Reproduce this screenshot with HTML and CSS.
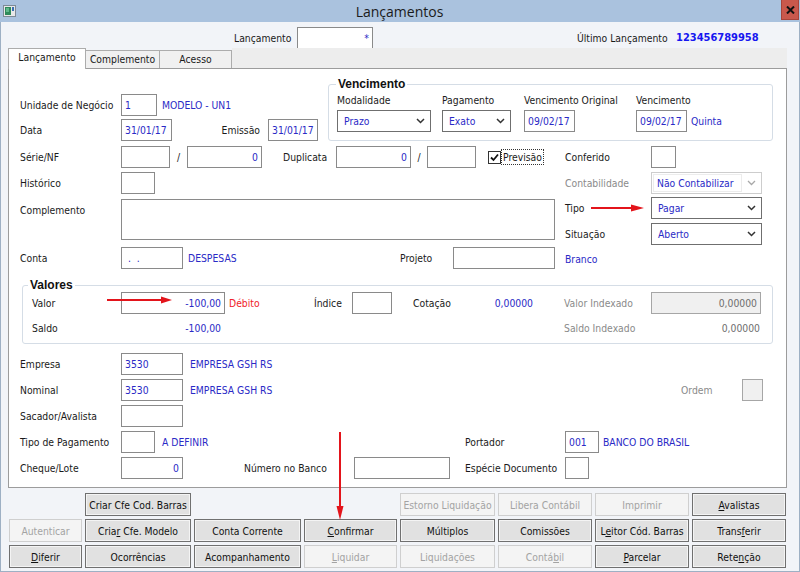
FILE: index.html
```html
<!DOCTYPE html>
<html lang="pt-BR">
<head>
    <meta charset="UTF-8">
    <meta name="viewport" content="width=device-width, initial-scale=1.0">
    <title>Lançamentos</title>
    <link rel="stylesheet" href="styles.css">
</head>
<body>
<div class="window">
    <!-- Title bar -->
    <div class="titlebar">
        <svg class="app-icon" width="13" height="12" viewBox="0 0 13 12">
            <rect x="0.5" y="0.5" width="12" height="11" fill="#e8e8e8" stroke="#7d8a96"/>
            <rect x="2" y="2" width="6" height="8" fill="#2f8a5a"/>
            <rect x="3" y="3" width="3" height="4" fill="#5fb88a"/>
            <rect x="9" y="2" width="2" height="4" fill="#3a6fb0"/>
        </svg>
        <div class="title">Lançamentos</div>
        <div class="close">
            <svg width="9" height="8" viewBox="0 0 9 8"><path d="M1 0.5l7 7M8 0.5l-7 7" stroke="#111" stroke-width="2"/></svg>
        </div>
    </div>

    <div class="top-row">
        <span class="lbl-lanc">Lançamento</span>
        <div class="fld w76 star">*</div>
        <span class="lbl-ultimo">Último Lançamento</span>
        <span class="ultimo">123456789958</span>
    </div>

    <!-- Tabs -->
    <div class="tabs">
        <div class="tab active">Lançamento</div>
        <div class="tab t2">Complemento</div>
        <div class="tab t3">Acesso</div>
        <div class="tab-fill"></div>
    </div>

    <div class="panel">
        <div class="top-block">
            <div class="top-left">
                <div class="row">
                    <span class="lbl">Unidade de Negócio</span>
                    <div class="fld w36">1</div>
                    <span class="link ml5">MODELO - UN1</span>
                </div>
                <div class="row">
                    <span class="lbl">Data</span>
                    <div class="fld w51">31/01/17</div>
                    <span class="lbl-emissao">Emissão</span>
                    <div class="fld w50">31/01/17</div>
                </div>
            </div>
            <fieldset class="group venc">
                <legend>Vencimento</legend>
                <div class="venc-cols">
                    <div class="venc-col c1">
                        <span class="cap">Modalidade</span>
                        <div class="combo w94"><span>Prazo</span><svg width="9" height="6" viewBox="0 0 9 6"><path d="M1 1l3.5 3.5L8 1" fill="none" stroke="#333" stroke-width="1.5"/></svg></div>
                    </div>
                    <div class="venc-col c2">
                        <span class="cap">Pagamento</span>
                        <div class="combo w69"><span>Exato</span><svg width="9" height="6" viewBox="0 0 9 6"><path d="M1 1l3.5 3.5L8 1" fill="none" stroke="#333" stroke-width="1.5"/></svg></div>
                    </div>
                    <div class="venc-col c3">
                        <span class="cap">Vencimento Original</span>
                        <div class="fld w51">09/02/17</div>
                    </div>
                    <div class="venc-col c4">
                        <span class="cap">Vencimento</span>
                        <div class="inline">
                            <div class="fld w51">09/02/17</div>
                            <span class="link ml4">Quinta</span>
                        </div>
                    </div>
                </div>
            </fieldset>
        </div>

        <div class="mid-block">
            <div class="mid-left">
                <div class="row">
                    <span class="lbl">Série/NF</span>
                    <div class="fld w49"></div>
                    <span class="slash">/</span>
                    <div class="fld w75 num">0</div>
                    <span class="lbl-dup">Duplicata</span>
                    <div class="fld w75 num">0</div>
                    <span class="slash s2">/</span>
                    <div class="fld w49"></div>
                    <span class="check">
                        <svg width="9" height="9" viewBox="0 0 9 9"><path d="M1 4.5l2.5 2.5L8 1.5" fill="none" stroke="#111" stroke-width="1.8"/></svg>
                    </span>
                    <span class="focus-lbl">Previsão</span>
                </div>
                <div class="row mt4">
                    <span class="lbl">Histórico</span>
                    <div class="fld w34"></div>
                </div>
                <div class="row row-tall mt5">
                    <span class="lbl top">Complemento</span>
                    <div class="fld memo"></div>
                </div>
                <div class="row mt7">
                    <span class="lbl">Conta</span>
                    <div class="conta-grp">
                        <div class="fld w62">&nbsp;.&nbsp;&nbsp;.</div>
                        <span class="link ml5">DESPESAS</span>
                    </div>
                    <span class="lbl-proj">Projeto</span>
                    <div class="fld w102"></div>
                </div>
            </div>
            <div class="mid-right">
                <div class="row">
                    <span class="rlbl">Conferido</span>
                    <div class="fld w25"></div>
                </div>
                <div class="row mt4">
                    <span class="rlbl gray">Contabilidade</span>
                    <div class="combo w111 disabled"><span class="inner">Não Contabilizar</span><svg width="9" height="6" viewBox="0 0 9 6"><path d="M1 1l3.5 3.5L8 1" fill="none" stroke="#a8a8a8" stroke-width="1.3"/></svg></div>
                </div>
                <div class="row mt3">
                    <span class="rlbl">Tipo</span>
                    <div class="combo w111"><span>Pagar</span><svg width="9" height="6" viewBox="0 0 9 6"><path d="M1 1l3.5 3.5L8 1" fill="none" stroke="#333" stroke-width="1.5"/></svg></div>
                </div>
                <div class="row mt4">
                    <span class="rlbl">Situação</span>
                    <div class="combo w111"><span>Aberto</span><svg width="9" height="6" viewBox="0 0 9 6"><path d="M1 1l3.5 3.5L8 1" fill="none" stroke="#333" stroke-width="1.5"/></svg></div>
                </div>
                <div class="row mt3">
                    <span class="link">Branco</span>
                </div>
            </div>
        </div>

        <fieldset class="group valores">
            <legend>Valores</legend>
            <div class="row">
                <span class="vlbl">Valor</span>
                <div class="fld w104 num">-100,00</div>
                <span class="debito">Débito</span>
                <span class="lbl-indice">Índice</span>
                <div class="fld w40"></div>
                <span class="lbl-cot">Cotação</span>
                <span class="link num w40">0,00000</span>
                <span class="lbl-vi gray">Valor Indexado</span>
                <div class="fld w110 num disabled">0,00000</div>
            </div>
            <div class="row mt3">
                <span class="vlbl">Saldo</span>
                <span class="link num w100">-100,00</span>
                <span class="lbl-si gray">Saldo Indexado</span>
                <span class="num w109 gray-val">0,00000</span>
            </div>
        </fieldset>

        <div class="lower-block">
            <div class="row">
                <span class="lbl">Empresa</span>
                <div class="fld w62">3530</div>
                <span class="link ml7">EMPRESA GSH RS</span>
            </div>
            <div class="row mt4">
                <span class="lbl">Nominal</span>
                <div class="fld w62">3530</div>
                <span class="link ml7">EMPRESA GSH RS</span>
                <div class="ordem">
                    <span class="gray">Ordem</span>
                    <div class="fld w21 disabled"></div>
                </div>
            </div>
            <div class="row mt4">
                <span class="lbl">Sacador/Avalista</span>
                <div class="fld w62"></div>
            </div>
            <div class="row mt4">
                <span class="lbl">Tipo de Pagamento</span>
                <div class="tp-grp">
                    <div class="fld w34"></div>
                    <span class="link ml7">A DEFINIR</span>
                </div>
                <span class="lbl-port">Portador</span>
                <div class="fld w34">001</div>
                <span class="link ml4">BANCO DO BRASIL</span>
            </div>
            <div class="row mt4">
                <span class="lbl">Cheque/Lote</span>
                <div class="fld w62 num">0</div>
                <span class="lbl-nb">Número no Banco</span>
                <div class="fld w96"></div>
                <span class="lbl-esp">Espécie Documento</span>
                <div class="fld w24"></div>
            </div>
        </div>
    </div>

    <!-- Buttons -->
    <div class="buttons">
        <span></span>
        <button>Criar Cfe Cod. Barras</button>
        <span></span>
        <span></span>
        <button disabled>Estorno Liquidação</button>
        <button disabled>Libera Contábil</button>
        <button disabled>Imprimir</button>
        <button><u>A</u>valistas</button>

        <button disabled>Autenticar</button>
        <button>Cria<u>r</u> Cfe. Modelo</button>
        <button>Conta Corrente</button>
        <button><u>C</u>onfirmar</button>
        <button>Múltiplos</button>
        <button>Comissões</button>
        <button>L<u>e</u>itor Cód. Barras</button>
        <button>Trans<u>f</u>erir</button>

        <button><u>D</u>iferir</button>
        <button>Ocorrências</button>
        <button>Acompanhamento</button>
        <button disabled><u>L</u>iquidar</button>
        <button disabled>Liquidações</button>
        <button disabled>Contá<u>b</u>il</button>
        <button><u>P</u>arcelar</button>
        <button>Rete<u>n</u>ção</button>
    </div>

    <!-- red annotation arrows -->
    <svg class="arrow arrow-valor" width="70" height="10" viewBox="0 0 70 10">
        <path d="M2 5H58" stroke="#e3141b" stroke-width="2"/>
        <path d="M56 1.5L67 5L56 8.5Z" fill="#e3141b"/>
    </svg>
    <svg class="arrow arrow-tipo" width="60" height="10" viewBox="0 0 60 10">
        <path d="M2 5H44" stroke="#e3141b" stroke-width="2"/>
        <path d="M42 1.5L55 5L42 8.5Z" fill="#e3141b"/>
    </svg>
    <svg class="arrow arrow-conf" width="10" height="92" viewBox="0 0 10 92">
        <path d="M5 0V76" stroke="#e3141b" stroke-width="2"/>
        <path d="M1.5 74L5 88L8.5 74Z" fill="#e3141b"/>
    </svg>
</div>
</body>
</html>
```

FILE: styles.css
```css
/* Reset */
* {
    margin: 0;
    padding: 0;
    box-sizing: border-box;
}

body {
    width: 800px;
    height: 572px;
    overflow: hidden;
    font-family: "DejaVu Sans Condensed", "Liberation Sans", Tahoma, sans-serif;
    font-size: 10.3px;
    color: #1a1a1a;
}

.window {
    position: relative;
    width: 800px;
    height: 572px;
    background: #f2f4f8;
    box-shadow: inset 1px 0 #9eb0c4, inset -1px 0 #9eb0c4, inset 0 -1px #9eb0c4;
}

/* Title bar */
.titlebar {
    height: 22px;
    background: #aac2de;
    display: flex;
    align-items: center;
}

.app-icon {
    margin-left: 3px;
}

.title {
    flex: 1;
    text-align: center;
    font-family: "Open Sans", "Liberation Sans", sans-serif;
    font-size: 14px;
    color: #1b1b1b;
    padding-left: 2px;
}

.close {
    align-self: flex-start;
    width: 18px;
    height: 20px;
    margin-right: 1px;
    background: #c9584c;
    border: 1px solid #a8443a;
    border-top: none;
    display: flex;
    align-items: center;
    justify-content: center;
}

/* Header row */
.top-row {
    display: flex;
    align-items: center;
    height: 21px;
    margin-top: 5px;
}

.lbl-lanc {
    margin-left: 234px;
    width: 63px;
}

.lbl-ultimo {
    margin-left: 204px;
    width: 99px;
}

.ultimo {
    color: #1717f0;
    font-weight: bold;
    font-size: 11px;
}

.star {
    text-align: right;
    color: #4a4ae8;
    padding-right: 4px;
}

/* Tabs */
.tabs {
    display: flex;
    align-items: flex-end;
    height: 20px;
    margin-left: 8px;
    width: 779px;
    position: relative;
    z-index: 1;
}

.tab {
    height: 18px;
    line-height: 16px;
    text-align: center;
    background: #f0f0f0;
    border: 1px solid #acacac;
    border-bottom: none;
}

.tab.active {
    width: 78px;
    height: 21px;
    margin-bottom: -1px;
    line-height: 17px;
    background: #fff;
}

.tab.t2 {
    width: 75px;
    margin-left: -1px;
}

.tab.t3 {
    width: 73px;
    margin-left: -1px;
}

.tab-fill {
    flex: 1;
    height: 20px;
    background: #ededed;
}

/* Tab panel */
.panel {
    margin-left: 8px;
    width: 779px;
    height: 420px;
    background: #fff;
    border: 1px solid #9c9c9c;
    padding-left: 11px;
}

.row {
    display: flex;
    align-items: center;
    height: 22px;
    white-space: nowrap;
}

.mt3 { margin-top: 3px; }
.mt4 { margin-top: 4px; }
.mt5 { margin-top: 5px; }
.mt7 { margin-top: 7px; }
.ml4 { margin-left: 4px; }
.ml5 { margin-left: 5px; }
.ml7 { margin-left: 7px; }

.lbl {
    width: 101px;
}

.lbl.top {
    align-self: flex-start;
    padding-top: 5px;
}

.link {
    color: #2a2ac6;
}

.gray {
    color: #8a8a8a;
}

/* Text fields */
.fld {
    height: 22px;
    line-height: 20px;
    border: 1px solid #8a8a8a;
    background: #fff;
    color: #2a2ac6;
    padding: 0 3px;
    white-space: nowrap;
    overflow: hidden;
}

.fld.disabled {
    background: #f0f0f0;
    border-color: #a6a6a6;
    color: #6e6e6e;
}

.num {
    text-align: right;
}

.w21 { width: 21px; }
.w24 { width: 24px; }
.w25 { width: 25px; }
.w34 { width: 34px; }
.w36 { width: 36px; }
.w40 { width: 40px; }
.w49 { width: 49px; }
.w50 { width: 50px; }
.w51 { width: 51px; }
.w62 { width: 62px; }
.w69 { width: 69px; }
.w75 { width: 75px; }
.w76 { width: 76px; }
.w94 { width: 94px; }
.w96 { width: 96px; }
.w100 { width: 100px; }
.w102 { width: 102px; }
.w104 { width: 104px; }
.w109 { width: 109px; }
.w110 { width: 110px; }
.w111 { width: 111px; }

/* Combo boxes */
.combo {
    height: 22px;
    border: 1px solid #6f6f6f;
    background: #fff;
    color: #2a2ac6;
    display: flex;
    align-items: center;
    justify-content: space-between;
    padding: 0 5px 0 6px;
}

.combo svg {
    flex-shrink: 0;
}

.combo.disabled {
    border-color: #cdcdcd;
    padding: 1px 5px 1px 1px;
}

.combo.disabled .inner {
    flex: 1;
    height: 18px;
    line-height: 16px;
    border: 1px solid #ececec;
    padding-left: 3px;
    margin-right: 5px;
}

/* Group boxes */
.group {
    border: 1px solid #d5dde6;
    border-radius: 3px;
}

.group legend {
    font-family: "Liberation Sans", sans-serif;
    font-weight: bold;
    font-size: 12px;
    line-height: 14px;
    padding: 0 2px;
    color: #111;
}

/* Top block */
.top-block {
    display: flex;
    padding-top: 8px;
}

.top-left {
    width: 308px;
    padding-top: 17px;
}

.top-left .row + .row {
    margin-top: 3px;
}

.lbl-emissao {
    width: 96px;
    text-align: right;
    padding-right: 8px;
}

.venc {
    width: 445px;
    padding: 3px 0 3px 8px;
}

.venc legend {
    margin-left: -1px;
}

.venc-cols {
    display: flex;
}

.venc-col {
    display: flex;
    flex-direction: column;
}

.venc-col .cap {
    height: 13px;
    line-height: 13px;
    margin-bottom: 3px;
}

.venc-col.c1 { width: 105px; }
.venc-col.c2 { width: 82px; }
.venc-col.c3 { width: 112px; }

.inline {
    display: flex;
    align-items: center;
}

/* Middle block */
.mid-block {
    display: flex;
    margin-top: 5px;
}

.mid-left {
    width: 545px;
}

.slash {
    width: 17px;
    text-align: center;
}

.slash.s2 {
    width: 16px;
}

.lbl-dup {
    margin-left: 21px;
    width: 53px;
}

.check {
    margin-left: 12px;
    width: 13px;
    height: 13px;
    border: 1px solid #333;
    background: #fff;
    display: flex;
    align-items: center;
    justify-content: center;
}

.focus-lbl {
    margin-left: 1px;
    padding: 0 1px;
    line-height: 14px;
    outline: 1px dotted #333;
}

.row-tall {
    height: 41px;
    align-items: flex-start;
}

.memo {
    width: 434px;
    height: 41px;
}

.conta-grp {
    width: 279px;
    display: flex;
    align-items: center;
}

.lbl-proj {
    width: 53px;
}

.mid-right {
    display: flex;
    flex-direction: column;
}

.rlbl {
    width: 86px;
}

/* Valores */
.valores {
    margin: 8px 0 0 2px;
    width: 751px;
    padding: 0 0 4px 9px;
}

.valores legend {
    margin-left: -4px;
}

.vlbl {
    width: 89px;
}

.debito {
    width: 89px;
    padding-left: 4px;
    color: #f0202a;
}

.lbl-indice {
    width: 38px;
}

.lbl-cot {
    margin-left: 21px;
    width: 80px;
}

.lbl-vi {
    margin-left: 31px;
    width: 87px;
}

.lbl-si {
    margin-left: 343px;
    width: 87px;
}

.gray-val {
    color: #6e6e6e;
}

/* Lower block */
.lower-block {
    margin-top: 9px;
}

.ordem {
    margin-left: auto;
    margin-right: 23px;
    display: flex;
    align-items: center;
}

.ordem span {
    width: 61px;
}

.tp-grp {
    width: 344px;
    display: flex;
    align-items: center;
}

.lbl-port {
    width: 100px;
}

.lbl-nb {
    margin-left: 61px;
    width: 110px;
}

.lbl-esp {
    margin-left: 15px;
    width: 100px;
}

/* Bottom buttons */
.buttons {
    display: grid;
    grid-template-columns: 73px 106px 107px 93px 95px 94px 94px 94px;
    grid-auto-rows: 23px;
    column-gap: 3px;
    row-gap: 3px;
    margin: 5px 0 0 9px;
}

button {
    font-family: "DejaVu Sans Condensed", "Liberation Sans", sans-serif;
    font-size: 10.3px;
    color: #111;
    background: #e1e1e1;
    border: 1px solid #707070;
    box-shadow: inset 0 0 0 1px #f4f4f4;
    white-space: nowrap;
    overflow: hidden;
}

button:disabled {
    background: #f4f4f4;
    border-color: #cfcfcf;
    box-shadow: none;
    color: #a3a3a3;
}

/* Annotation arrows */
.arrow {
    position: absolute;
}

.arrow-valor {
    left: 105px;
    top: 295px;
}

.arrow-tipo {
    left: 589px;
    top: 203px;
}

.arrow-conf {
    left: 335px;
    top: 432px;
}
```
